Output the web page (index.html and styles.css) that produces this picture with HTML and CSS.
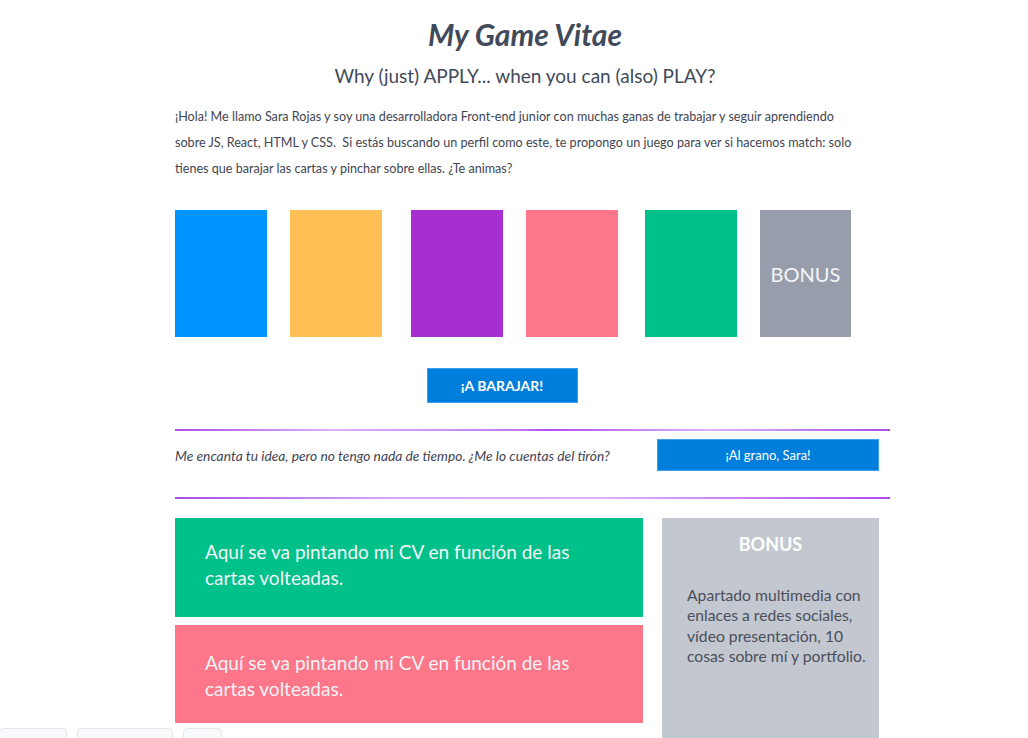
FILE: index.html
```html
<!DOCTYPE html>
<html lang="es">
<head>
<meta charset="utf-8">
<title>My Game Vitae</title>
<link rel="stylesheet" href="styles.css">
</head>
<body>
<main class="page">
  <header class="header">
    <h1 class="title">My Game Vitae</h1>
    <h2 class="subtitle">Why (just) APPLY... when you can (also) PLAY?</h2>
  </header>
  <p class="intro">¡Hola! Me llamo Sara Rojas y soy una desarrolladora Front-end junior con muchas ganas de trabajar y seguir aprendiendo sobre JS, React, HTML y CSS.&nbsp; Si estás buscando un perfil como este, te propongo un juego para ver si hacemos match: solo tienes que barajar las cartas y pinchar sobre ellas. ¿Te animas?</p>

  <section class="cards">
    <div class="card card-blue"></div>
    <div class="card card-yellow"></div>
    <div class="card card-purple"></div>
    <div class="card card-pink"></div>
    <div class="card card-green"></div>
    <div class="card card-gray">BONUS</div>
  </section>

  <div class="shuffle-wrap">
    <button class="btn btn-shuffle">¡A BARAJAR!</button>
  </div>

  <hr class="divider divider-a">
  <div class="quick-row">
    <p class="quick-text">Me encanta tu idea, pero no tengo nada de tiempo. ¿Me lo cuentas del tirón?</p>
    <button class="btn btn-quick">¡Al grano, Sara!</button>
  </div>
  <hr class="divider divider-b">

  <section class="cv">
    <div class="cv-col">
      <div class="cv-box cv-green">Aquí se va pintando mi CV en función de las cartas volteadas.</div>
      <div class="cv-box cv-pink">Aquí se va pintando mi CV en función de las cartas volteadas.</div>
    </div>
    <aside class="bonus">
      <h3 class="bonus-title">BONUS</h3>
      <p class="bonus-text">Apartado multimedia con enlaces a redes sociales, vídeo presentación, 10 cosas sobre mí y portfolio.</p>
    </aside>
  </section>
</main>
<nav class="tabbar">
  <span class="tab tab-1"></span>
  <span class="tab tab-2"></span>
  <span class="tab tab-3"></span>
</nav>
</body>
</html>
```

FILE: styles.css
```css
* { box-sizing: border-box; }

html, body {
  margin: 0;
  padding: 0;
  background: #ffffff;
}

body {
  font-family: Lato, "Open Sans", "Liberation Sans", sans-serif;
  color: #3f4553;
  overflow: hidden;
  height: 738px;
}

.page {
  width: 715px;
  margin-left: 175px;
  padding-top: 16px;
}

.header {
  width: 700px;
  text-align: center;
}

.title {
  margin: 0;
  font-size: 30px;
  line-height: 36px;
  font-weight: 700;
  font-style: italic;
  color: #414a5a;
}

.subtitle {
  margin: 12px 0 0;
  font-size: 19px;
  line-height: 24px;
  font-weight: 400;
  color: #414a5a;
}

.intro {
  width: 685px;
  margin: 16px 0 0;
  font-size: 12.6px;
  line-height: 26px;
  color: #3f4553;
}

.cards {
  margin-top: 28px;
  display: flex;
}

.card {
  width: 92px;
  height: 127px;
  margin-left: 23px;
  display: flex;
  align-items: center;
  justify-content: center;
  color: #f4f5f7;
  font-size: 20px;
}

.card:first-child { margin-left: 0; }
.card-purple { margin-left: 29px; }
.card-green { margin-left: 27px; }

.card-blue { background: #0094fe; }
.card-yellow { background: #ffbf55; }
.card-purple { background: #a72ed0; }
.card-pink { background: #fd7689; }
.card-green { background: #00c18a; }
.card-gray { background: #979dab; width: 91px; }

.shuffle-wrap {
  width: 654px;
  margin-top: 31px;
  display: flex;
  justify-content: center;
}

.btn {
  font-family: inherit;
  border: 1px solid #3b9ef0;
  background: #007edb;
  color: #ffffff;
  cursor: pointer;
  padding: 0;
}

.btn-shuffle {
  width: 151px;
  height: 35px;
  font-size: 14px;
  font-weight: 700;
}

.divider {
  width: 715px;
  height: 2px;
  border: 0;
  margin: 0;
}

.divider-a {
  margin-top: 26px;
  background: linear-gradient(90deg, #b04de8 0%, #dbb2fa 22%, #c27af5 48%, #b34cf0 52%, #dbb2fa 75%, #a94ee3 100%);
}

.divider-b {
  margin-top: 26px;
  background: linear-gradient(90deg, #a94ee3 0%, #d5a8f8 30%, #dbb2fa 60%, #b34cf0 100%);
}

.quick-row {
  width: 704px;
  margin-top: 8px;
  display: flex;
  justify-content: space-between;
  align-items: center;
}

.quick-text {
  margin: 0;
  font-size: 13.8px;
  font-style: italic;
  color: #3f4553;
}

.btn-quick {
  width: 222px;
  height: 32px;
  font-size: 13px;
  font-weight: 400;
}

.cv {
  margin-top: 19px;
  display: grid;
  grid-template-columns: 468px 217px;
  column-gap: 19px;
  align-items: start;
}

.cv-col {
  display: flex;
  flex-direction: column;
  gap: 8px;
}

.cv-box {
  height: 99px;
  padding: 21px 30px 0;
  font-size: 19px;
  line-height: 26px;
  color: #f3f4f6;
}

.cv-green { background: #00c18a; }
.cv-pink { background: #fd7689; height: 98px; padding-top: 25px; }

.bonus {
  height: 240px;
  background: #c3c7cf;
  padding-top: 14px;
}

.bonus-title {
  margin: 0;
  text-align: center;
  font-size: 18px;
  line-height: 24px;
  font-weight: 700;
  color: #ffffff;
}

.bonus-text {
  margin: 29px 0 0;
  padding: 0 8px 0 25px;
  font-size: 15.7px;
  line-height: 20.3px;
  color: #4a4f5b;
}

.tabbar {
  position: fixed;
  left: 0;
  top: 728px;
  display: flex;
  gap: 10px;
}

.tab {
  display: block;
  height: 30px;
  background: #f8f9fb;
  border: 1px solid #e4e6ea;
  border-radius: 4px;
}

.tab-1 { width: 68px; margin-left: -1px; }
.tab-2 { width: 96px; }
.tab-3 { width: 39px; }
```
